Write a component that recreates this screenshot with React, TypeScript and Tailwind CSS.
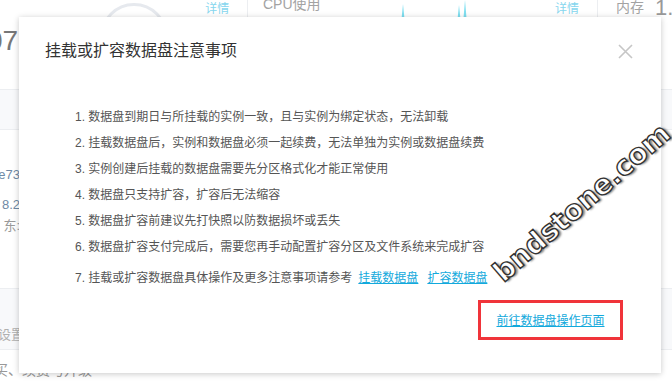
import React from 'react';

const notes = [
    '数据盘到期日与所挂载的实例一致，且与实例为绑定状态，无法卸载',
    '挂载数据盘后，实例和数据盘必须一起续费，无法单独为实例或数据盘续费',
    '实例创建后挂载的数据盘需要先分区格式化才能正常使用',
    '数据盘只支持扩容，扩容后无法缩容',
    '数据盘扩容前建议先打快照以防数据损坏或丢失',
    '数据盘扩容支付完成后，需要您再手动配置扩容分区及文件系统来完成扩容',
];

function Background() {
    return (
        <div className="flex flex-col">
            {/* metrics row, page scrolled a bit */}
            <div className="flex h-[90px] border-b border-[#eceef1]">
                <div className="flex w-[248px] shrink-0 items-start border-r border-[#eceef1]">
                    <span className="ml-[-13px] mt-[24px] shrink-0 text-[28px] leading-[34px] text-[#777] whitespace-nowrap">07</span>
                    <div className="ml-[82px] mt-[3px] h-[68px] w-[68px] shrink-0 rounded-full border-[3px] border-[#e6e9ee]" />
                    <span className="ml-[37px] mt-[1px] shrink-0 whitespace-nowrap text-[12px] leading-[16px] text-[#86d6ee]">详情</span>
                </div>
                <div className="flex w-[350px] shrink-0 items-start border-r border-[#eceef1]">
                    <span className="ml-[15px] mt-[-6px] shrink-0 whitespace-nowrap text-[14px] leading-[20px] text-[#a3a3a3]">CPU使用</span>
                    <svg width="70" height="24" viewBox="0 0 70 24" className="ml-[80px] mt-[0px] shrink-0">
                        <path d="M0 24 L2 4 L4 24 Z M56 24 L58 5 L60 24 Z M62 24 L64 0 L66 24 Z" fill="#7fdff0" />
                    </svg>
                    <span className="ml-auto mr-[18px] mt-[1px] shrink-0 whitespace-nowrap text-[12px] leading-[16px] text-[#86d6ee]">详情</span>
                </div>
                <div className="flex min-w-0 flex-1 items-start overflow-hidden">
                    <span className="ml-[18px] mt-[-3px] shrink-0 whitespace-nowrap text-[14px] leading-[20px] text-[#a3a3a3]">内存</span>
                    <span className="ml-[11px] mt-[-6px] shrink-0 whitespace-nowrap text-[22px] leading-[28px] text-[#999]">1.</span>
                </div>
            </div>

            <div className="h-[40px] border-b border-[#eceef1] bg-[#f8f9fb]" />

            <div className="flex h-[158px] w-[20px] flex-col items-end pt-[37px] text-[13px] leading-[16px] whitespace-nowrap">
                <span className="text-[#6f8aa6]">e73</span>
                <span className="mt-[14px] text-[#6f8aa6]">8.2</span>
                <span className="mt-[5px] text-[#999]">东:</span>
            </div>

            <div className="flex h-[62px] border-y border-[#eceef1] bg-[#f8f9fb]">
                <div className="flex w-[24px] flex-col items-end pt-[38px] whitespace-nowrap">
                    <span className="text-[13px] leading-[16px] text-[#b0b0b0]">字设置</span>
                </div>
            </div>

            <div className="flex w-[120px] pt-[11px] whitespace-nowrap">
                <span className="ml-[-6px] text-[14px] leading-[18px] text-[#999]">买、续费与升级</span>
            </div>
        </div>
    );
}

function NoticeModal() {
    return (
        <div className="absolute left-[19px] top-[17px] flex h-[356px] w-[642px] flex-col bg-white shadow-[0_1px_6px_rgba(0,0,0,0.22)]">
            <div className="flex items-center justify-between pl-[26px] pr-[28px] pt-[22px]">
                <h2 className="text-[16px] leading-[24px] text-[#333]">挂载或扩容数据盘注意事项</h2>
                <svg width="15" height="15" viewBox="0 0 15 15">
                    <path d="M1 1 L14 14 M14 1 L1 14" stroke="#c6c6c6" strokeWidth="1.6" />
                </svg>
            </div>

            <ol className="mt-[41px] flex flex-col pl-[56px] text-[12px] leading-[26px] text-[#555]">
                {notes.map((note, i) => (
                    <li key={i} className="whitespace-nowrap">
                        {i + 1}. {note}
                    </li>
                ))}
                <li className="mt-[5px] whitespace-nowrap">
                    7. 挂载或扩容数据盘具体操作及更多注意事项请参考
                    <a className="ml-[6px] text-[#12a9dc] underline">挂载数据盘</a>
                    <a className="ml-[9px] text-[#12a9dc] underline">扩容数据盘</a>
                </li>
            </ol>

            <div className="mt-[9px] flex justify-end pr-[38px]">
                <div className="flex h-[40px] w-[145px] items-center justify-center border-[3px] border-[#f0343a] pt-[1px]">
                    <a className="text-[12px] leading-[16px] text-[#12a9dc] underline">前往数据盘操作页面</a>
                </div>
            </div>
        </div>
    );
}

export default function App() {
    return (
        <div className="relative h-[387px] w-[672px] overflow-hidden bg-white font-['Liberation_Sans','Noto_Sans_CJK_SC',sans-serif]">
            <Background />
            <NoticeModal />
            {/* site watermark */}
            <span className="absolute left-[582px] top-[203px] -translate-x-1/2 -translate-y-1/2 -rotate-[41deg] whitespace-nowrap font-['DejaVu_Sans',sans-serif] text-[28px] font-bold leading-none text-white [-webkit-text-stroke:1.4px_#333] [text-shadow:2px_2px_2px_rgba(0,0,0,0.45)]">
                bndstone.com
            </span>
        </div>
    );
}
